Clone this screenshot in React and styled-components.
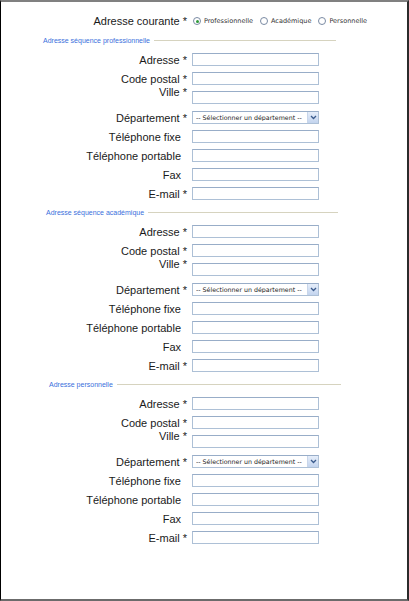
import styled, { createGlobalStyle } from 'styled-components';

const GlobalStyle = createGlobalStyle`
	html, body {
		margin: 0;
		padding: 0;
		background: #ffffff;
	}
	body {
		font-family: 'Liberation Sans', Arial, sans-serif;
	}
`;

const sections = [
	{ title: 'Adresse séquence professionnelle', left: 43, right: 336 },
	{ title: 'Adresse séquence académique', left: 46, right: 338 },
	{ title: 'Adresse personnelle', left: 49, right: 341 },
];

const fields = [
	{ label: 'Adresse', required: true },
	{ label: 'Code postal', required: true },
	{ label: 'Ville', required: true, raised: true },
	{ label: 'Département', required: true, select: true },
	{ label: 'Téléphone fixe' },
	{ label: 'Téléphone portable' },
	{ label: 'Fax' },
	{ label: 'E-mail', required: true },
];

const radios = [
	{ label: 'Professionnelle', checked: true },
	{ label: 'Académique' },
	{ label: 'Personnelle' },
];

const Chevron = () => (
	<svg width="7" height="5" viewBox="0 0 7 5">
		<path d="M1 1 L3.5 3.5 L6 1" fill="none" stroke="#3b5b8c" strokeWidth="1.3" />
	</svg>
);

const App = () => {
	return (
		<>
			<GlobalStyle />
			<Frame>
				<TopRow>
					<Label>Adresse courante *</Label>
					<RadioGroup>
						{radios.map((radio) => (
							<RadioItem key={radio.label}>
								<RadioCircle>{radio.checked && <RadioDot />}</RadioCircle>
								<RadioText>{radio.label}</RadioText>
							</RadioItem>
						))}
					</RadioGroup>
				</TopRow>
				{sections.map((section) => (
					<Section key={section.title}>
						<Legend $left={section.left} $right={section.right}>
							<LegendText>{section.title}</LegendText>
							<LegendLine />
						</Legend>
						<Rows>
							{fields.map((field) => (
								<Row key={field.label} $raised={field.raised}>
									<Label $raised={field.raised} $optional={!field.required}>
										{field.label}
										{field.required ? ' *' : ''}
									</Label>
									{field.select ? (
										<SelectBox>
											<SelectText>-- Sélectionner un département --</SelectText>
											<DropButton>
												<Chevron />
											</DropButton>
										</SelectBox>
									) : (
										<TextInput type="text" />
									)}
								</Row>
							))}
						</Rows>
					</Section>
				))}
			</Frame>
		</>
	);
};

export default App;

const Frame = styled.div`
	box-sizing: border-box;
	width: 409px;
	height: 601px;
	border-top: 2px solid #808080;
	border-left: 1px solid #000000;
	border-right: 2px solid #2b2b2b;
	border-bottom: 2px solid #6b6b6b;
	padding-top: 12px;
	overflow: hidden;
`;

const TopRow = styled.div`
	display: flex;
	align-items: center;
	height: 14px;
	gap: 6px;
	margin-bottom: 7px;
`;

const Label = styled.label`
	box-sizing: border-box;
	width: 186px;
	flex-shrink: 0;
	text-align: right;
	font-size: 11px;
	line-height: 13px;
	color: #1a1a1a;
	white-space: nowrap;
	padding-right: ${({ $optional }) => ($optional ? '6px' : '0')};
	margin-bottom: -1px;
	margin-top: ${({ $raised }) => ($raised ? '-5px' : '0')};
	align-self: ${({ $raised }) => ($raised ? 'flex-start' : 'auto')};
`;

const RadioGroup = styled.div`
	display: flex;
	align-items: center;
	gap: 6px;
`;

const RadioItem = styled.div`
	display: flex;
	align-items: center;
	gap: 3px;
	margin-right: 1px;
`;

const RadioCircle = styled.span`
	box-sizing: border-box;
	width: 8px;
	height: 8px;
	border: 1px solid #7a8aa3;
	border-radius: 50%;
	background: #ffffff;
	display: flex;
	align-items: center;
	justify-content: center;
`;

const RadioDot = styled.span`
	width: 3px;
	height: 3px;
	border-radius: 50%;
	background: #2f9a3a;
`;

const RadioText = styled.span`
	font-family: 'DejaVu Sans', Verdana, sans-serif;
	font-size: 6.5px;
	color: #333333;
	white-space: nowrap;
`;

const Section = styled.section`
	margin-bottom: 7px;
`;

const Legend = styled.div`
	display: flex;
	align-items: center;
	height: 10px;
	margin-left: ${({ $left }) => $left - 1}px;
	width: ${({ $left, $right }) => $right - $left}px;
	gap: 4px;
	margin-bottom: 8px;
`;

const LegendText = styled.span`
	font-size: 7px;
	color: #3b6fdc;
	white-space: nowrap;
`;

const LegendLine = styled.span`
	flex: 1;
	height: 1px;
	background: #d6d3bf;
`;

const Rows = styled.div`
	display: flex;
	flex-direction: column;
`;

const Row = styled.div`
	display: flex;
	align-items: flex-end;
	gap: 5px;
	margin-bottom: ${({ $raised }) => ($raised ? '7px' : '6px')};

	&:last-child {
		margin-bottom: 0;
	}
`;

const TextInput = styled.input`
	box-sizing: border-box;
	width: 127px;
	height: 13px;
	margin: 0;
	padding: 0 2px;
	border: 1px solid #adc0d6;
	border-top-color: #98adc8;
	background: #ffffff;
	outline: none;
	font-size: 8px;
`;

const SelectBox = styled.div`
	box-sizing: border-box;
	width: 127px;
	height: 13px;
	border: 1px solid #adc0d6;
	border-top-color: #98adc8;
	background: #ffffff;
	display: flex;
	align-items: center;
	padding-left: 3px;
`;

const SelectText = styled.span`
	flex: 1;
	font-family: 'DejaVu Sans', Verdana, sans-serif;
	font-size: 6.3px;
	color: #222222;
	white-space: nowrap;
	overflow: hidden;
`;

const DropButton = styled.span`
	box-sizing: border-box;
	width: 11px;
	height: 11px;
	display: flex;
	align-items: center;
	justify-content: center;
	background: linear-gradient(#e6eefa, #c3d4ee);
	border-left: 1px solid #c9d6ea;
`;
